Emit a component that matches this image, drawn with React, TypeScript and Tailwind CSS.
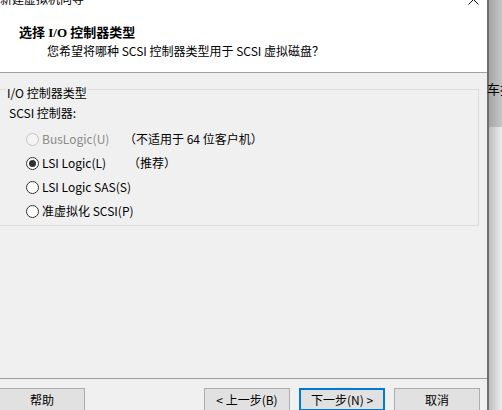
import React from "react";

function Radio({ checked, disabled }: { checked?: boolean; disabled?: boolean }) {
  return (
    <span
      className={
        "flex h-[13px] w-[13px] shrink-0 items-center justify-center rounded-full border " +
        (disabled ? "border-[#c4c4c4] bg-[#f4f4f4]" : "border-[#333333] bg-white")
      }
    >
      {checked && <span className="h-[7px] w-[7px] rounded-full bg-[#333333]" />}
    </span>
  );
}

function Row({
  label,
  note,
  checked,
  disabled,
  noteClass,
}: {
  label: string;
  note?: string;
  checked?: boolean;
  disabled?: boolean;
  noteClass?: string;
}) {
  return (
    <div className="flex h-[24px] items-center pl-[28px]">
      <Radio checked={checked} disabled={disabled} />
      <span className={"ml-[3px] w-[82px] shrink-0 whitespace-nowrap " + (disabled ? "text-[#8a8a8a]" : "text-black")}>
        {label}
      </span>
      {note && <span className={"whitespace-nowrap text-black " + (noteClass ?? "")}>{note}</span>}
    </div>
  );
}

function Btn({ children, primary, className }: { children: React.ReactNode; primary?: boolean; className?: string }) {
  return (
    <div
      className={
        "flex h-[23px] w-[86px] shrink-0 items-center justify-center bg-[#e1e1e1] " +
        (primary ? "border-2 border-[#0078d7] " : "border border-[#adadad] ") +
        (className ?? "")
      }
    >
      {children}
    </div>
  );
}

export default function App() {
  return (
    <div className="flex h-[410px] w-[502px] overflow-hidden bg-[#f0f0f0] font-['Noto_Sans_CJK_SC',sans-serif] text-[12px] leading-[16px] text-black">
      <div className="flex w-[487px] shrink-0 flex-col">
        <div className="relative h-[73px] shrink-0 border-b border-[#a0a0a0] bg-white">
          <div className="-mt-[9px] whitespace-nowrap">新建虚拟机向导</div>
          <svg className="absolute left-[468px] top-[-6px]" width="11" height="11" viewBox="0 0 11 11">
            <path d="M0.5 0.5 L10.5 10.5 M10.5 0.5 L0.5 10.5" stroke="#111" strokeWidth="1" fill="none" />
          </svg>
          <div className="mt-[17px] whitespace-nowrap pl-[19px] font-['Liberation_Serif','Noto_Sans_CJK_SC',serif] text-[13px] font-bold leading-[17px]">
            选择 I/O 控制器类型
          </div>
          <div className="mt-[2px] whitespace-nowrap pl-[47px]">您希望将哪种 SCSI 控制器类型用于 SCSI 虚拟磁盘？</div>
        </div>

        <div className="flex flex-1 flex-col">
          <fieldset className="mt-[5px] -ml-[3px] w-[482px] border border-[#dcdcdc] p-0 pb-[2px]">
            <legend className="ml-[8px] px-[1px] pt-[7px] leading-[16px]">I/O 控制器类型</legend>
            <div className="mt-[4px] pl-[11px]">SCSI 控制器:</div>
            <div className="mt-[6px] flex flex-col">
              <Row label="BusLogic(U)" note="（不适用于 64 位客户机）" disabled noteClass="ml-[0px]" />
              <Row label="LSI Logic(L)" note="（推荐）" checked noteClass="ml-[4px]" />
              <Row label="LSI Logic SAS(S)" />
              <Row label="准虚拟化 SCSI(P)" />
            </div>
          </fieldset>

          <div className="flex-1" />

          <div className="border-t border-[#a0a0a0]" />
          <div className="mt-[9px] flex h-[22px] items-start pr-[7px]">
            <Btn className="-ml-[1px]">帮助</Btn>
            <div className="ml-auto flex gap-[9px]">
              <Btn>&lt; 上一步(B)</Btn>
              <Btn primary>下一步(N) &gt;</Btn>
              <Btn>取消</Btn>
            </div>
          </div>
        </div>
      </div>

      <div className="flex w-[15px] shrink-0 border-l-2 border-[#6e6e6e]">
        <div className="flex flex-1 flex-col">
          <div className="relative h-[127px] shrink-0 bg-gradient-to-r from-[#a6a6a6] to-[#c6c6c6]">
            <div className="absolute left-[-2px] top-[80px] whitespace-nowrap text-[13px] leading-[17px]">车拍</div>
          </div>
          <div className="flex-1 bg-gradient-to-r from-[#bdbdbd] to-[#eeeeee]" />
        </div>
      </div>
    </div>
  );
}
